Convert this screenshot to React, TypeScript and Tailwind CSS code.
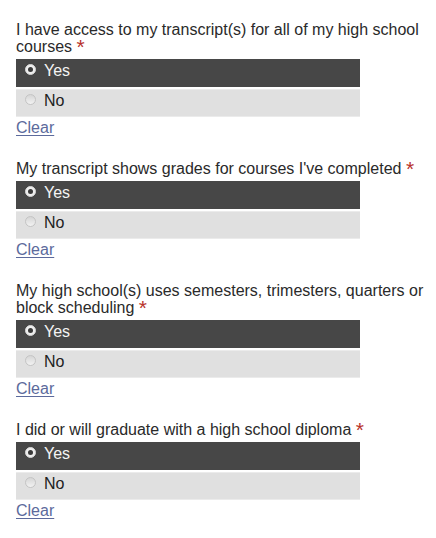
import React from 'react'

interface Question {
  label: string
  answer: 'Yes' | 'No'
}

const questions: Question[] = [
  { label: 'I have access to my transcript(s) for all of my high school courses', answer: 'Yes' },
  { label: "My transcript shows grades for courses I've completed", answer: 'Yes' },
  { label: 'My high school(s) uses semesters, trimesters, quarters or block scheduling', answer: 'Yes' },
  { label: 'I did or will graduate with a high school diploma', answer: 'Yes' },
]

function Radio({ checked }: { checked: boolean }) {
  if (checked) {
    return (
      <span className="flex h-[11px] w-[11px] items-center justify-center rounded-full border border-[#d6d6d6] bg-[#efefef]">
        <span className="h-[5px] w-[5px] rounded-full bg-[#3a3a3a]" />
      </span>
    )
  }
  return (
    <span className="h-[11px] w-[11px] rounded-full border border-[#c4c4c4] bg-gradient-to-b from-[#d6d6d6] to-[#f2f2f2]" />
  )
}

function Option({ label, checked }: { label: string; checked: boolean }) {
  return (
    <div
      className={
        checked
          ? 'flex h-[28px] items-start gap-[8px] bg-[#474747] pl-[9px] pt-[3px] text-[#f4f4f4]'
          : 'flex h-[28px] items-start gap-[8px] border-y border-[#ebebeb] bg-[#e0e0e0] pl-[9px] pt-[2px] text-[#222]'
      }
    >
      <span className="flex h-[18px] items-center pb-[3px]">
        <Radio checked={checked} />
      </span>
      <span className="leading-[18px]">{label}</span>
    </div>
  )
}

function QuestionBlock({ q }: { q: Question }) {
  return (
    <div className="flex flex-col">
      <p className="mb-1 leading-[17px] text-[#2a2a2a]">
        {q.label}{' '}
        <span className="inline-block h-[17px] align-top text-[21px] leading-[17px] text-[#b8322c]">*</span>
      </p>
      <div className="flex w-[344px] flex-col gap-[2px]">
        <Option label="Yes" checked={q.answer === 'Yes'} />
        <Option label="No" checked={q.answer === 'No'} />
      </div>
      <a href="#" className="mt-[2px] self-start leading-[17px] text-[#5c6a9c] underline underline-offset-2">
        Clear
      </a>
    </div>
  )
}

export default function App() {
  return (
    <div className="min-h-[538px] w-[436px] bg-white pl-4 pr-1 pt-[21px] font-['Liberation_Sans',Arial,sans-serif] text-[16px]">
      <div className="flex flex-col gap-6">
        {questions.map((q, i) => (
          <QuestionBlock key={i} q={q} />
        ))}
      </div>
    </div>
  )
}
